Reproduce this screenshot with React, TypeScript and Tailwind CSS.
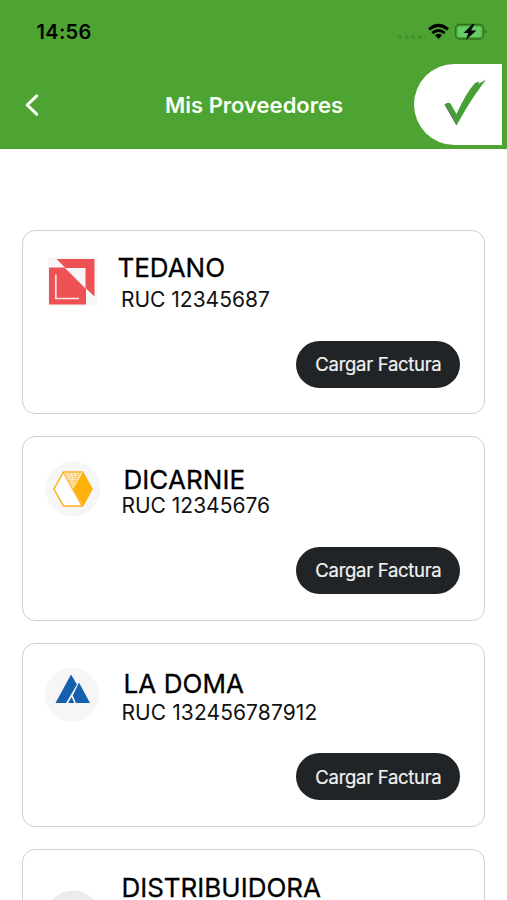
import type { ReactNode } from "react";

function TedanoLogo() {
  return (
    <svg viewBox="0 0 56 56" className="h-14 w-14">
      <rect x="4" y="4" width="49" height="49" fill="#f7f7f7" />
      <path d="M12.5 6H50.500V43.5L41.500 35V15H21.500Z" fill="#ee5153" />
      <path d="M5 14.5H20.5L42 36V51.500H5Z" fill="#ee5153" />
      <path d="M11.800 21.500V45.500H35" fill="none" stroke="#f9e4e4" strokeWidth="1.700" />
    </svg>
  );
}

function DicarnieLogo() {
  return (
    <svg viewBox="0 0 56 56" className="h-14 w-14">
      <circle cx="28" cy="28" r="27.500" fill="#f6f6f6" />
      <path d="M18.500 11H37.500L47 28L37.500 45H18.500L9 28Z" fill="#fff" stroke="#fbb01f" strokeWidth="1.500" />
      <path d="M38 11L47.500 28L38 45L28 28Z" fill="#fdb10a" />
      <path d="M18.500 12L37 45" stroke="#fbb01f" strokeWidth="1.200" />
      <path
        d="M19 13H37M20.200 15.200H36M21.400 17.400H34.700M22.600 19.600H33.400M23.800 21.800H32M25 24H30.700M20.500 11.500L28.500 27M24 11.500L29 25M28 11.500L30 23M32 11.500L30.500 21M35 11.500L31 20"
        fill="none"
        stroke="#fbc65b"
        strokeWidth="0.900"
      />
    </svg>
  );
}

function LaDomaLogo() {
  return (
    <svg viewBox="0 0 56 56" className="h-14 w-14">
      <circle cx="28" cy="28" r="27" fill="#f6f6f6" />
      <path d="M27 7.500L33 17.500L22 36H11.500Z" fill="#1560ae" />
      <path d="M35 15.500L46 36H32L28.800 28.500Z" fill="#1560ae" />
      <path d="M27.600 30L30.300 36H24.200Z" fill="#1560ae" />
    </svg>
  );
}

function BlankLogo() {
  return (
    <svg viewBox="0 0 56 56" className="h-14 w-14">
      <circle cx="28" cy="28" r="27.500" fill="#ececec" />
    </svg>
  );
}

type CardProps = {
  name: string;
  ruc?: string;
  logo: ReactNode;
  logoClass: string;
  textClass: string;
  nameClass: string;
  rucClass?: string;
};

function ProviderCard({ name, ruc, logo, logoClass, textClass, nameClass, rucClass = "" }: CardProps) {
  return (
    <article className="flex h-[184.3px] w-[463px] shrink-0 flex-col rounded-[13px] border-[1.500px] border-[#cfcfcf] bg-white">
      <div className="flex h-[109.500px] shrink-0 items-start">
        <div className={`w-14 shrink-0 ${logoClass}`}>{logo}</div>
        <div className={`whitespace-nowrap text-black ${textClass}`}>
          <h2 className={`text-[26px] leading-[26px] font-normal [-webkit-text-stroke:0.3px_black] ${nameClass}`}>{name}</h2>
          {ruc && <p className={`text-[21px] leading-[21px] text-[#111] ${rucClass}`}>{ruc}</p>}
        </div>
      </div>
      {ruc && (
        <div className="flex justify-end pr-6">
          <button className="flex h-[47px] w-[164px] items-center justify-center rounded-full bg-[#202427] pt-[2px] text-[18.500px] tracking-[-0.3px] whitespace-nowrap text-[#f2f2f2] [-webkit-text-stroke:0.2px_#f2f2f2]">
            Cargar Factura
          </button>
        </div>
      )}
    </article>
  );
}

export default function App() {
  return (
    <div className="h-[900px] w-[507px] overflow-hidden bg-white font-[Inter,'Liberation_Sans',sans-serif]">
      <header className="h-[149px] bg-[#4da432]">
        <div className="flex h-16 items-center justify-between pr-[18px] pl-[36.500px]">
          <span className="text-[20px] font-semibold tracking-[0.3px] text-black">14:56</span>
          <svg viewBox="0 0 92 20" className="h-5 w-[92px]">
            <g fill="#3f8f2b">
              <circle cx="3" cy="15" r="1.800" />
              <circle cx="9.500" cy="15" r="1.800" />
              <circle cx="16" cy="15" r="1.800" />
              <circle cx="22.500" cy="15" r="1.800" />
            </g>
            <g fill="none" stroke="#000" strokeWidth="3">
              <path d="M32 7.400Q41.500 -0.600 51 7.400" />
              <path d="M35.300 11.200Q41.500 5.800 47.700 11.200" />
            </g>
            <path d="M38 13.300Q41.500 10.400 45 13.300L41.500 17Z" fill="#000" />
            <rect x="58.500" y="2.500" width="28" height="14.500" rx="4" fill="#4da432" stroke="#2f701f" strokeWidth="1.300" />
            <rect x="60.500" y="4.500" width="24" height="10.500" rx="2.500" fill="#65cd68" />
            <path d="M88 7.500Q91 9.800 88 12Z" fill="#2f701f" />
            <path d="M75.500 2L66.500 11H71.300L69 17.800L79.500 8.400H74L77.500 2Z" fill="#000" />
          </svg>
        </div>
        <div className="grid h-[81px] grid-cols-[165px_1fr_88px] items-center pr-[5px]">
          <button aria-label="Volver" className="pl-6">
            <svg viewBox="0 0 16 24" className="h-6 w-4">
              <path d="M12.700 2.800L3.200 12L12.700 21.200" fill="none" stroke="#fff" strokeWidth="3" strokeLinecap="round" strokeLinejoin="round" />
            </svg>
          </button>
          <h1 className="pt-px text-[22px] font-semibold whitespace-nowrap text-[#f8fff5]">Mis Proveedores</h1>
          <div className="h-[81px] w-[88px] rounded-l-[41px] bg-white">
            <svg viewBox="0 0 88 81" className="h-full w-full">
              <path d="M30.500 40.500Q33.500 37.500 36.500 39.500L42.500 50Q52 29 61 19L65.500 17.500L64.500 20L72 15.500L67.500 21.800Q56 37 42.500 61.500Z" fill="#46a035" />
              <path d="M30.500 40.500L42.500 61.500L42.500 58L33.500 41Z" fill="#5a8557" />
            </svg>
          </div>
        </div>
      </header>
      <main className="flex flex-col gap-[22px] pt-[81px] pl-[22.400px]">
        <ProviderCard
          name="TEDANO"
          ruc="RUC 12345687"
          logo={<TedanoLogo />}
          logoClass="ml-[21px] mt-[22px]"
          textClass="ml-[17px] mt-6"
          nameClass=""
          rucClass="mt-[8px] ml-[3.500px]"
        />
        <ProviderCard
          name="DICARNIE"
          ruc="RUC 12345676"
          logo={<DicarnieLogo />}
          logoClass="ml-[21.500px] mt-[24px]"
          textClass="ml-[20.500px] mt-[30px]"
          nameClass="ml-[2px] tracking-[0.1px]"
          rucClass="mt-[2px]"
        />
        <ProviderCard
          name="LA DOMA"
          ruc="RUC 132456787912"
          logo={<LaDomaLogo />}
          logoClass="ml-[21px] mt-[23px]"
          textClass="ml-[21px] mt-[27px]"
          nameClass="ml-[2px] tracking-[0.1px]"
          rucClass="mt-[5px] tracking-[0.1px]"
        />
        <ProviderCard
          name="DISTRIBUIDORA"
          logo={<BlankLogo />}
          logoClass="ml-[21.500px] mt-10"
          textClass="ml-[20.500px] mt-[25px]"
          nameClass=""
        />
      </main>
    </div>
  );
}
